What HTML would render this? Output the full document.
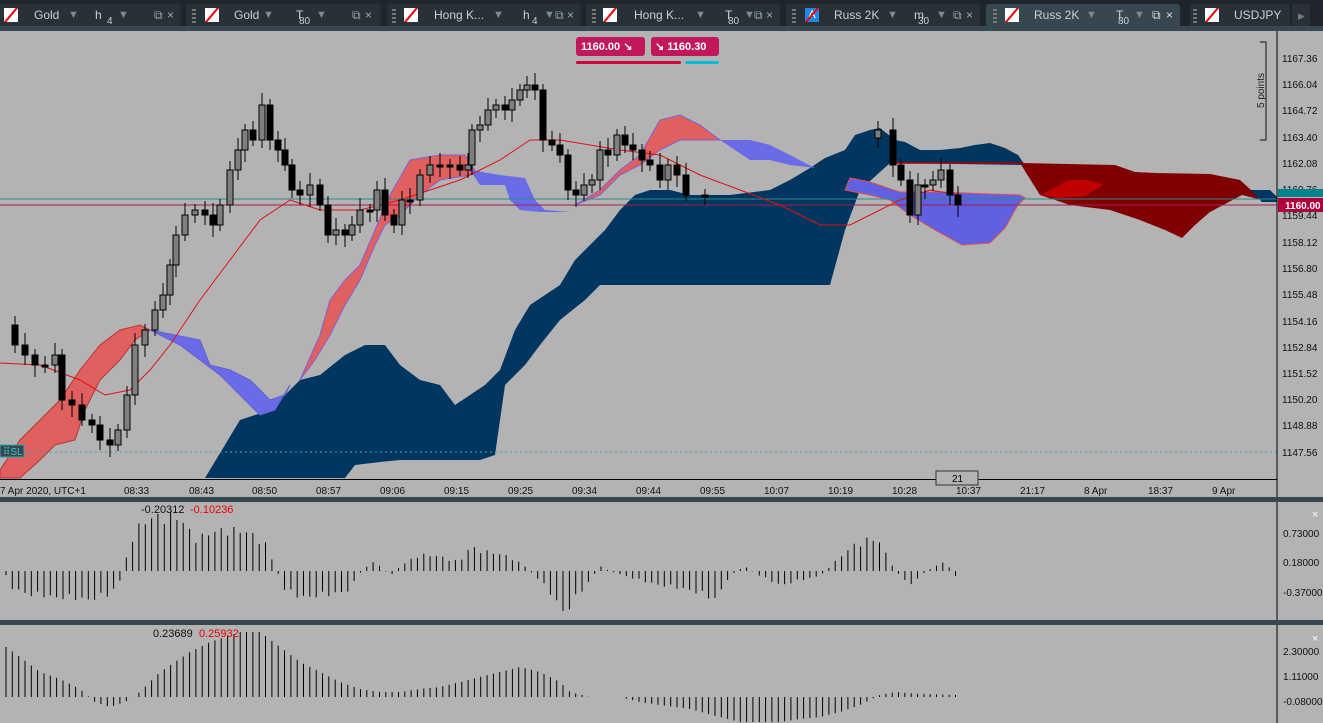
<!DOCTYPE html>
<html><head><meta charset="utf-8"><style>
*{margin:0;padding:0;box-sizing:border-box}
body{width:1323px;height:723px;overflow:hidden;background:#b3b3b3;font-family:"Liberation Sans",sans-serif;position:relative}
#tabs{position:absolute;left:0;top:0;width:1323px;height:26px;background:#1f252b;color:#c9d1d6;font-size:12px}
#strip{position:absolute;left:0;top:26px;width:1323px;height:5px;background:#37474f}
.tab{position:absolute;top:4px;height:22px;background:#283038;border-radius:3px 3px 0 0}
.act{background:#37474f}
#tabs span{position:absolute;top:8px;line-height:14px}
#tabs span.sub{font-size:10px;top:15px}
#tabs span.ar{color:#7d8a92;font-size:11px}
#tabs span.g{color:#9aa;font-size:12px}
.ic{position:absolute;top:8px;width:14px;height:14px;background:#fff;overflow:hidden}
.ic:after{content:"";position:absolute;left:6px;top:-3px;width:2px;height:20px;background:#e00;transform:rotate(40deg)}
.grip{position:absolute;top:9px;width:4px;height:14px;background:repeating-linear-gradient(#777 0 2px,transparent 2px 4px)}
svg{position:absolute;left:0;top:0}
</style></head><body>
<div id="tabs">
 <div class="tab" style="left:0;width:181px"></div>
 <div class="tab" style="left:186px;width:195px"></div>
 <div class="tab" style="left:387px;width:194px"></div>
 <div class="tab" style="left:586px;width:194px"></div>
 <div class="tab" style="left:786px;width:194px"></div>
 <div class="tab act" style="left:986px;width:194px"></div>
 <div class="tab" style="left:1190px;width:100px"></div>
 <div class="tab" style="left:1292px;width:18px"></div>
 <div class="ic" style="left:4px"></div><span style="left:34px">Gold</span><span class="ar" style="left:68px">▼</span><span style="left:95px">h</span><span class="sub" style="left:107px">4</span><span class="ar" style="left:118px">▼</span><span class="g" style="left:154px">⧉</span><span class="g" style="left:167px">×</span>
 <div class="grip" style="left:192px"></div><div class="ic" style="left:205px"></div><span style="left:234px">Gold</span><span class="ar" style="left:263px">▼</span><span style="left:296px">T</span><span class="sub" style="left:299px">80</span><span class="ar" style="left:316px">▼</span><span class="g" style="left:352px">⧉</span><span class="g" style="left:365px">×</span>
 <div class="grip" style="left:392px"></div><div class="ic" style="left:404px"></div><span style="left:434px">Hong K...</span><span class="ar" style="left:493px">▼</span><span style="left:523px">h</span><span class="sub" style="left:532px">4</span><span class="ar" style="left:544px">▼</span><span class="g" style="left:555px">⧉</span><span class="g" style="left:567px">×</span>
 <div class="grip" style="left:592px"></div><div class="ic" style="left:603px"></div><span style="left:634px">Hong K...</span><span class="ar" style="left:695px">▼</span><span style="left:725px">T</span><span class="sub" style="left:728px">80</span><span class="ar" style="left:744px">▼</span><span class="g" style="left:754px">⧉</span><span class="g" style="left:766px">×</span>
 <div class="grip" style="left:792px"></div><div class="ic" style="left:805px;background:#1e88e5;color:#fff;font-size:11px;text-align:center;line-height:14px">A</div><span style="left:834px">Russ 2K</span><span class="ar" style="left:887px">▼</span><span style="left:914px">m</span><span class="sub" style="left:918px">30</span><span class="ar" style="left:936px">▼</span><span class="g" style="left:953px">⧉</span><span class="g" style="left:966px">×</span>
 <div class="grip" style="left:993px"></div><div class="ic" style="left:1005px"></div><span style="left:1034px">Russ 2K</span><span class="ar" style="left:1086px">▼</span><span style="left:1116px">T</span><span class="sub" style="left:1118px">80</span><span class="ar" style="left:1134px">▼</span><span class="g" style="left:1152px;color:#ddd">⧉</span><span class="g" style="left:1166px;color:#ddd">×</span>
 <div class="grip" style="left:1193px"></div><div class="ic" style="left:1205px"></div><span style="left:1234px">USDJPY</span>
 <span style="left:1298px;color:#777;font-size:9px;top:9px">▶</span>
</div>
<div id="strip"></div>

<svg width="1323" height="723" style="top:0" id="s">
<polygon fill="#003660" points="205,478 240,420 270,410 300,380 320,375 345,355 365,345 385,345 400,365 420,380 440,385 455,405 470,395 485,385 500,370 515,330 530,305 545,295 560,285 575,260 590,245 605,230 620,210 635,195 650,190 670,190 690,195 730,195 770,190 790,180 810,168 825,158 845,150 855,135 870,130 880,128 895,140 905,142 920,150 940,150 960,148 975,145 990,143 1005,148 1018,155 1025,165 890,163 860,190 845,230 830,285 600,285 585,300 560,320 540,345 525,365 505,385 495,455 480,460 400,460 380,462 355,465 345,478"/>
<polygon fill="#e06060" stroke="#b33" stroke-width="1" points="0,470 20,440 40,420 60,400 80,370 100,345 120,330 140,325 150,330 135,340 120,360 100,380 85,410 75,440 55,445 40,460 20,478 0,478"/>
<polygon fill="#6b6be8" stroke="#6060d0" points="150,330 200,340 210,365 230,370 250,380 270,400 285,395 290,385 275,410 260,415 240,395 220,375 200,360 180,345"/>
<polygon fill="#e06060" stroke="#8060d0" points="300,380 320,335 330,300 345,280 360,265 375,230 390,195 410,160 440,155 465,155 475,170 470,175 440,180 420,195 400,215 385,225 375,245 360,280 345,305 330,335 315,360"/>
<polygon fill="#6b6be8" points="470,170 500,175 525,178 535,200 545,210 570,212 540,212 520,210 510,200 505,185 480,185"/>
<polygon fill="#e06060" stroke="#8060d0" points="575,205 600,190 620,170 640,155 660,120 680,115 700,125 720,140 700,140 680,140 660,150 640,165 620,175 600,195"/>
<polygon fill="#6b6be8" points="700,140 750,140 770,145 790,155 815,168 790,165 770,160 750,160 735,150 720,140"/>
<polygon fill="#6060e0" stroke="#e05050" points="845,190 870,195 890,200 910,215 935,230 962,245 990,243 1005,228 1018,205 1025,198 1020,195 990,194 940,192 900,192 870,182 850,178"/>
<polygon fill="#800000" points="1020,163 1115,165 1135,172 1155,173 1210,174 1240,180 1262,200 1242,195 1210,212 1195,225 1182,238 1165,230 1140,220 1110,210 1070,205 1040,195"/>
<polygon fill="#c00000" points="1040,195 1060,185 1068,180 1085,180 1100,183 1103,185 1085,196 1060,198"/>
<polygon fill="#003660" points="1250,190 1270,190 1277,197 1277,202 1262,202"/>
<polyline fill="none" stroke="#a00" stroke-width="1.5" points="890,163 1022,163"/>
<line x1="0" y1="199" x2="1277" y2="199" stroke="#2a8a8f"/>
<line x1="0" y1="205" x2="1277" y2="205" stroke="#a0204a"/>
<line x1="0" y1="452" x2="1277" y2="452" stroke="#3aa" stroke-dasharray="2,3"/>
<polyline fill="none" stroke="#e01010" stroke-width="1" points="0,363 40,365 80,380 105,395 130,390 150,370 170,345 200,300 230,260 260,220 290,200 320,210 360,210 400,200 430,190 460,180 500,160 530,140 560,140 590,145 620,150 660,155 700,175 740,190 780,205 820,225 850,225 880,210 900,200 930,190 960,195"/>
<g id="candles"></g>
<line x1="1277" y1="31" x2="1277" y2="723" stroke="#000"/>
<line x1="0" y1="479.5" x2="1277" y2="479.5" stroke="#000"/>
<rect x="0" y="497" width="1323" height="5" fill="#37474f"/>
<rect x="0" y="620" width="1323" height="5" fill="#37474f"/>
<g id="bars"></g>
<g font-size="10" fill="#111">
<text x="1282" y="62">1167.36</text><text x="1282" y="88">1166.04</text><text x="1282" y="114">1164.72</text><text x="1282" y="141">1163.40</text><text x="1282" y="167">1162.08</text><text x="1282" y="193">1160.76</text><text x="1282" y="219">1159.44</text><text x="1282" y="246">1158.12</text><text x="1282" y="272">1156.80</text><text x="1282" y="298">1155.48</text><text x="1282" y="325">1154.16</text><text x="1282" y="351">1152.84</text><text x="1282" y="377">1151.52</text><text x="1282" y="403">1150.20</text><text x="1282" y="429">1148.88</text><text x="1282" y="456">1147.56</text>
<text x="1283" y="537">0.73000</text><text x="1283" y="566">0.18000</text><text x="1283" y="596">-0.37000</text>
<text x="1283" y="655">2.30000</text><text x="1283" y="680">1.11000</text><text x="1283" y="705">-0.08000</text>
</g>
<rect x="1278" y="189" width="45" height="8" fill="#00838f"/>
<rect x="1278" y="198" width="45" height="14" fill="#b0003a"/>
<text x="1285" y="209" font-size="10" font-weight="bold" fill="#fff">1160.00</text>
<text x="1312" y="518" font-size="11" fill="#fff">×</text><text x="1312" y="642" font-size="11" fill="#fff">×</text>
<path d="M1260 42 H1266 V140 H1260" fill="none" stroke="#111"/>
<text transform="translate(1264,108) rotate(-90)" font-size="10" fill="#222">5 points</text>
<g font-size="10" fill="#111">
<text x="0" y="494">7 Apr 2020, UTC+1</text><text x="124" y="494">08:33</text><text x="189" y="494">08:43</text><text x="252" y="494">08:50</text><text x="316" y="494">08:57</text><text x="380" y="494">09:06</text><text x="444" y="494">09:15</text><text x="508" y="494">09:25</text><text x="572" y="494">09:34</text><text x="636" y="494">09:44</text><text x="700" y="494">09:55</text><text x="764" y="494">10:07</text><text x="828" y="494">10:19</text><text x="892" y="494">10:28</text><text x="956" y="494">10:37</text><text x="1020" y="494">21:17</text><text x="1084" y="494">8 Apr</text><text x="1148" y="494">18:37</text><text x="1212" y="494">9 Apr</text>
<text x="141" y="513" font-size="11">-0.20312</text><text x="190" y="513" font-size="11" fill="#e00">-0.10236</text>
<text x="153" y="637" font-size="11">0.23689</text><text x="199" y="637" font-size="11" fill="#e00">0.25932</text>
</g>
<rect x="0" y="445" width="24" height="12" fill="#37474f" stroke="#3aa"/><text x="3" y="455" font-size="10" fill="#3cc">⠿SL</text>
<rect x="936" y="471" width="42" height="14" fill="#b3b3b3" stroke="#333"/><text x="952" y="482" font-size="10">21</text>
<rect x="576" y="37" width="69" height="19" rx="3" fill="#c2185b"/><text x="581" y="50" font-size="11" font-weight="bold" fill="#fff">1160.00  ↘</text>
<rect x="651" y="37" width="68" height="19" rx="3" fill="#c2185b"/><text x="655" y="50" font-size="11" font-weight="bold" fill="#fff">↘  1160.30</text>
<rect x="576" y="61" width="105" height="3" rx="1.5" fill="#d5003c"/><rect x="685" y="61" width="34" height="3" rx="1.5" fill="#00bcd4"/>
</svg>
<script>
var NS="http://www.w3.org/2000/svg";
function el(p,t,a){var e=document.createElementNS(NS,t);for(var k in a)e.setAttribute(k,a[k]);p.appendChild(e);return e;}
var C=[[6,325],[15,345],[25,355],[35,365],[45,365],[55,355],[62,400],[72,405],[82,420],[92,425],[100,440],[110,445],[118,430],[127,395],[135,345],[145,330],[155,310],[163,295],[170,265],[176,235],[185,215],[195,210],[205,215],[213,225],[220,205],[230,170],[238,150],[245,130],[253,140],[262,105],[270,140],[278,150],[285,165],[292,190],[300,195],[310,185],[320,205],[328,235],[336,230],[345,235],[352,225],[360,210],[370,210],[377,190],[385,215],[394,225],[402,200],[410,200],[420,175],[430,165],[440,165],[450,165],[460,170],[468,165],[472,130],[480,125],[488,110],[496,105],[505,110],[512,100],[520,90],[527,85],[535,90],[543,140],[552,145],[560,155],[568,190],[576,195],[584,185],[592,180],[600,150],[608,155],[617,135],[625,145],[633,150],[642,160],[650,165],[660,180],[668,165],[677,175],[686,195],[705,195],[878,130],[893,165],[901,180],[910,215],[918,185],[925,185],[933,180],[941,170],[950,195],[958,205]];
var g=document.getElementById("candles");
for(var i=1;i<C.length;i++){var x=C[i][0],o=C[i-1][1],c=C[i][1];if(x-C[i-1][0]>30)o=c+8;
var t=Math.min(o,c),b=Math.max(o,c);if(b-t<2)b=t+2;
el(g,"line",{x1:x,x2:x,y1:t-6-(i%3)*3,y2:b+6+(i%4)*2,stroke:"#000"});
el(g,"rect",{x:x-3,y:t,width:6,height:b-t,fill:c<o?"#7f7f7f":"#000",stroke:"#000"});}
function interp(P,x){for(var i=1;i<P.length;i++)if(x<=P[i][0]){var a=P[i-1],b=P[i];return a[1]+(b[1]-a[1])*(x-a[0])/(b[0]-a[0]);}return P[P.length-1][1];}
var P2=[[6,-5],[12,-18],[30,-25],[60,-28],[90,-30],[110,-25],[120,-10],[128,20],[135,45],[150,55],[170,60],[180,55],[195,35],[210,40],[230,45],[250,40],[265,30],[275,5],[285,-20],[300,-28],[330,-25],[350,-20],[360,-2],[372,10],[380,5],[390,-5],[400,5],[420,18],[440,15],[460,10],[470,25],[490,20],[510,15],[525,5],[540,-10],[555,-30],[565,-45],[575,-30],[590,-10],[600,5],[610,0],[625,-5],[640,-10],[660,-15],[690,-20],[715,-30],[730,-5],[745,5],[760,-5],[780,-15],[800,-10],[820,-5],[840,15],[855,28],[870,35],[880,30],[890,10],[900,-5],[910,-15],[920,-5],[935,5],[945,10],[958,-10]];
var P3=[[6,50],[20,40],[40,25],[60,18],[80,8],[95,-5],[110,-10],[125,-5],[140,5],[160,25],[190,45],[210,55],[240,65],[260,65],[280,50],[300,35],[320,25],[340,15],[360,8],[380,5],[400,5],[420,8],[440,10],[460,15],[480,20],[500,25],[520,30],[540,25],[560,15],[570,5],[590,0],[620,0],[640,-5],[660,-8],[690,-12],[720,-20],[740,-25],[780,-25],[800,-22],[820,-20],[840,-15],[860,-8],[880,2],[895,5],[920,3],[958,2]];
var gb=document.getElementById("bars"),k=0;
for(var x=6;x<=960;x+=6.33){k++;var j=[1,0.8,1.0,0.9,0.95][k%5];
var h=interp(P2,x)*j;el(gb,"line",{x1:x.toFixed(1),x2:x.toFixed(1),y1:571,y2:(571-h).toFixed(1),stroke:"#000"});
var h3=interp(P3,x);el(gb,"line",{x1:x.toFixed(1),x2:x.toFixed(1),y1:697,y2:(697-h3).toFixed(1),stroke:"#000"});}
</script>
</body></html>
